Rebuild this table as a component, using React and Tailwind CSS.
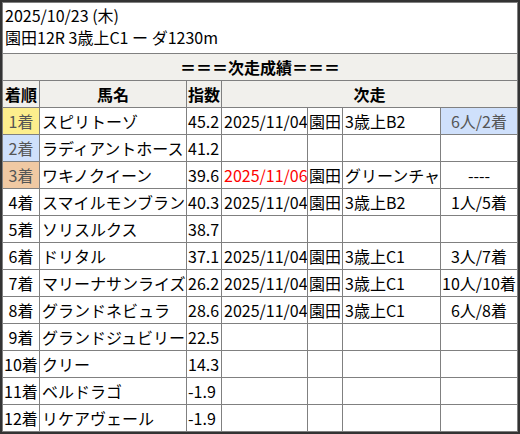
const rows = [
  { rank: '1着', rankBg: 'bg-[#fdee8d]', name: 'スピリトーゾ', idx: '45.2', date: '2025/11/04', place: '園田', race: '3歳上B2', result: '6人/2着', resultBlue: true },
  { rank: '2着', rankBg: 'bg-[#cfe0fb]', name: 'ラディアントホース', idx: '41.2' },
  { rank: '3着', rankBg: 'bg-[#f0c9a3]', name: 'ワキノクイーン', idx: '39.6', date: '2025/11/06', red: true, place: '園田', race: 'グリーンチャ', result: '----' },
  { rank: '4着', name: 'スマイルモンブラン', idx: '40.3', date: '2025/11/04', place: '園田', race: '3歳上B2', result: '1人/5着' },
  { rank: '5着', name: 'ソリスルクス', idx: '38.7' },
  { rank: '6着', name: 'ドリタル', idx: '37.1', date: '2025/11/04', place: '園田', race: '3歳上C1', result: '3人/7着' },
  { rank: '7着', name: 'マリーナサンライズ', idx: '26.2', date: '2025/11/04', place: '園田', race: '3歳上C1', result: '10人/10着' },
  { rank: '8着', name: 'グランドネビュラ', idx: '28.6', date: '2025/11/04', place: '園田', race: '3歳上C1', result: '6人/8着' },
  { rank: '9着', name: 'グランドジュビリー', idx: '22.5' },
  { rank: '10着', name: 'クリー', idx: '14.3' },
  { rank: '11着', name: 'ベルドラゴ', idx: '-1.9' },
  { rank: '12着', name: 'リケアヴェール', idx: '-1.9' },
];

const cell = 'whitespace-nowrap overflow-hidden leading-[26px]';
const head = 'bg-[#f1f0ec] font-bold text-center whitespace-nowrap leading-[26px]';

export default function App() {
  return (
    <div className="w-[520px] h-[434px] border-l-2 border-t-2 border-r-2 border-b-2 border-[#333] bg-white font-['Noto_Sans_CJK_JP',sans-serif] text-[16px] text-black">
      <div className="grid grid-cols-[36px_146px_34px_85px_34px_97px_76px] grid-rows-[50px_repeat(14,26px)] gap-px bg-[#808080] p-px w-[516px]">
        <div className="col-span-7 bg-white pl-[2px] pt-[1px] leading-[22px]">
          <div>2025/10/23 (木)</div>
          <div>園田12R 3歳上C1 ー ダ1230m</div>
        </div>
        <div className={`col-span-7 ${head}`}>＝＝＝次走成績＝＝＝</div>
        <div className={head}>着順</div>
        <div className={head}>馬名</div>
        <div className={head}>指数</div>
        <div className={`col-span-4 ${head}`}>次走</div>
        {rows.map((r) => (
          <div key={r.rank} className="contents">
            <div className={`${cell} text-center ${r.rankBg ? `${r.rankBg} text-[#555]` : 'bg-white'}`}>{r.rank}</div>
            <div className={`${cell} bg-white pl-[2px]`}>{r.name}</div>
            <div className={`${cell} bg-white pl-px`}>{r.idx}</div>
            <div className={`${cell} bg-white pl-[2px] ${r.red ? 'text-[#ff0000]' : ''}`}>{r.date}</div>
            <div className={`${cell} bg-white pl-px`}>{r.place}</div>
            <div className={`${cell} bg-white pl-[2px]`}>{r.race}</div>
            <div className={`${cell} text-center ${r.resultBlue ? 'bg-[#cfe0fb] text-[#555]' : 'bg-white'}`}>{r.result}</div>
          </div>
        ))}
      </div>
    </div>
  );
}
